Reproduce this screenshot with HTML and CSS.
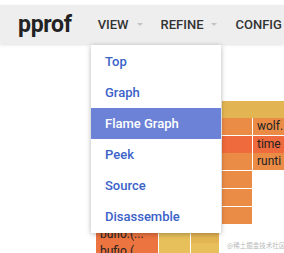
FILE: index.html
```html
<!DOCTYPE html>
<html lang="en">
  <head>
    <meta charset="UTF-8" />
    <meta name="viewport" content="width=device-width, initial-scale=1.0" />
    <title>pprof</title>
    <link rel="stylesheet" href="styles.css">
  </head>
  <body>
    <header class="header">
      <h1 class="logo">pprof</h1>
      <nav class="nav">
        <span class="nav-item">VIEW <i class="caret"></i></span>
        <span class="nav-item">REFINE <i class="caret"></i></span>
        <span class="nav-item">CONFIG</span>
      </nav>
    </header>

    <section class="flame">
      <div class="cell yellow" style="left: 222px; top: 57px; width: 62px;"></div>

      <div class="cell orange" style="left: 222px; top: 74px; width: 30px;"></div>
      <div class="cell red" style="left: 222px; top: 92px; width: 30px;"></div>
      <div class="cell orange" style="left: 222px; top: 109px; width: 30px;"></div>
      <div class="cell orange" style="left: 222px; top: 127px; width: 30px;"></div>
      <div class="cell orange" style="left: 222px; top: 145px; width: 30px;"></div>
      <div class="cell orange" style="left: 222px; top: 163px; width: 30px;"></div>

      <div class="cell orange" style="left: 253px; top: 74px; width: 31px;">wolf.</div>
      <div class="cell red" style="left: 253px; top: 92px; width: 31px;">time</div>
      <div class="cell orange" style="left: 253px; top: 109px; width: 31px;">runti</div>

      <div class="cell rust" style="left: 96px; top: 165px; width: 62px;"></div>
      <div class="cell rust" style="left: 96px; top: 182px; width: 62px;">bufio.(...</div>
      <div class="cell rust" style="left: 96px; top: 199px; width: 62px;">bufio.(</div>
      <div class="cell gold" style="left: 159px; top: 182px; width: 31px;"></div>
      <div class="cell gold" style="left: 159px; top: 199px; width: 31px;"></div>
      <div class="cell yellow" style="left: 191px; top: 182px; width: 28px;"></div>
      <div class="cell gold" style="left: 191px; top: 199px; width: 28px;"></div>

      <span class="watermark">@稀土掘金技术社区</span>
    </section>

    <ul class="submenu">
      <li><a href="#">Top</a></li>
      <li><a href="#">Graph</a></li>
      <li><a href="#" class="active">Flame Graph</a></li>
      <li><a href="#">Peek</a></li>
      <li><a href="#">Source</a></li>
      <li><a href="#">Disassemble</a></li>
    </ul>
  </body>
</html>
```

FILE: styles.css
```css
* {
  margin: 0;
  padding: 0;
  box-sizing: border-box;
}

body {
  width: 284px;
  height: 253px;
  overflow: hidden;
  padding-top: 5px;
  background-color: white;
  font-family: Roboto, "Noto Sans", sans-serif;
  position: relative;
}

.header {
  height: 39px;
  background-color: #eeeeee;
  display: flex;
  align-items: center;
  padding-left: 18px;
  box-shadow: 0 1px 3px rgba(0, 0, 0, 0.12);
  position: relative;
  z-index: 1;
}

.logo {
  font-size: 23px;
  font-weight: 700;
  color: #222;
  letter-spacing: -0.3px;
  margin-top: -1px;
}

.nav {
  display: flex;
  align-items: center;
  margin-left: 26px;
  gap: 18px;
}

.nav-item {
  font-size: 13px;
  font-weight: 500;
  color: #333;
  white-space: nowrap;
  display: flex;
  align-items: center;
}

.caret {
  display: inline-block;
  margin-left: 8px;
  width: 0;
  height: 0;
  border-left: 3px solid transparent;
  border-right: 3px solid transparent;
  border-top: 3px solid #c4c4c4;
}

.flame {
  position: relative;
  height: 209px;
}

.cell {
  position: absolute;
  height: 17px;
  font-size: 12px;
  line-height: 17px;
  color: #222;
  padding-left: 4px;
  white-space: nowrap;
  overflow: hidden;
}

.yellow {
  background-color: #e3b552;
}

.gold {
  background-color: #e7c05b;
}

.orange {
  background-color: #eb8c46;
}

.red {
  background-color: #ef6a3c;
}

.rust {
  background-color: #ec7440;
}

.watermark {
  position: absolute;
  left: 227px;
  top: 196px;
  font-size: 6.5px;
  color: #b9b9b9;
  font-family: "Noto Sans CJK SC", sans-serif;
  white-space: nowrap;
}

.submenu {
  position: absolute;
  left: 91px;
  top: 45px;
  width: 130px;
  list-style: none;
  background-color: white;
  padding: 1px 0;
  box-shadow: 0 1px 5px rgba(0, 0, 0, 0.3);
  z-index: 2;
}

.submenu a {
  display: block;
  height: 31px;
  line-height: 31px;
  padding-left: 14px;
  font-size: 13px;
  font-weight: 500;
  color: #3a62c9;
  text-decoration: none;
}

.submenu a.active {
  background-color: #6b82d6;
  color: white;
}
```
